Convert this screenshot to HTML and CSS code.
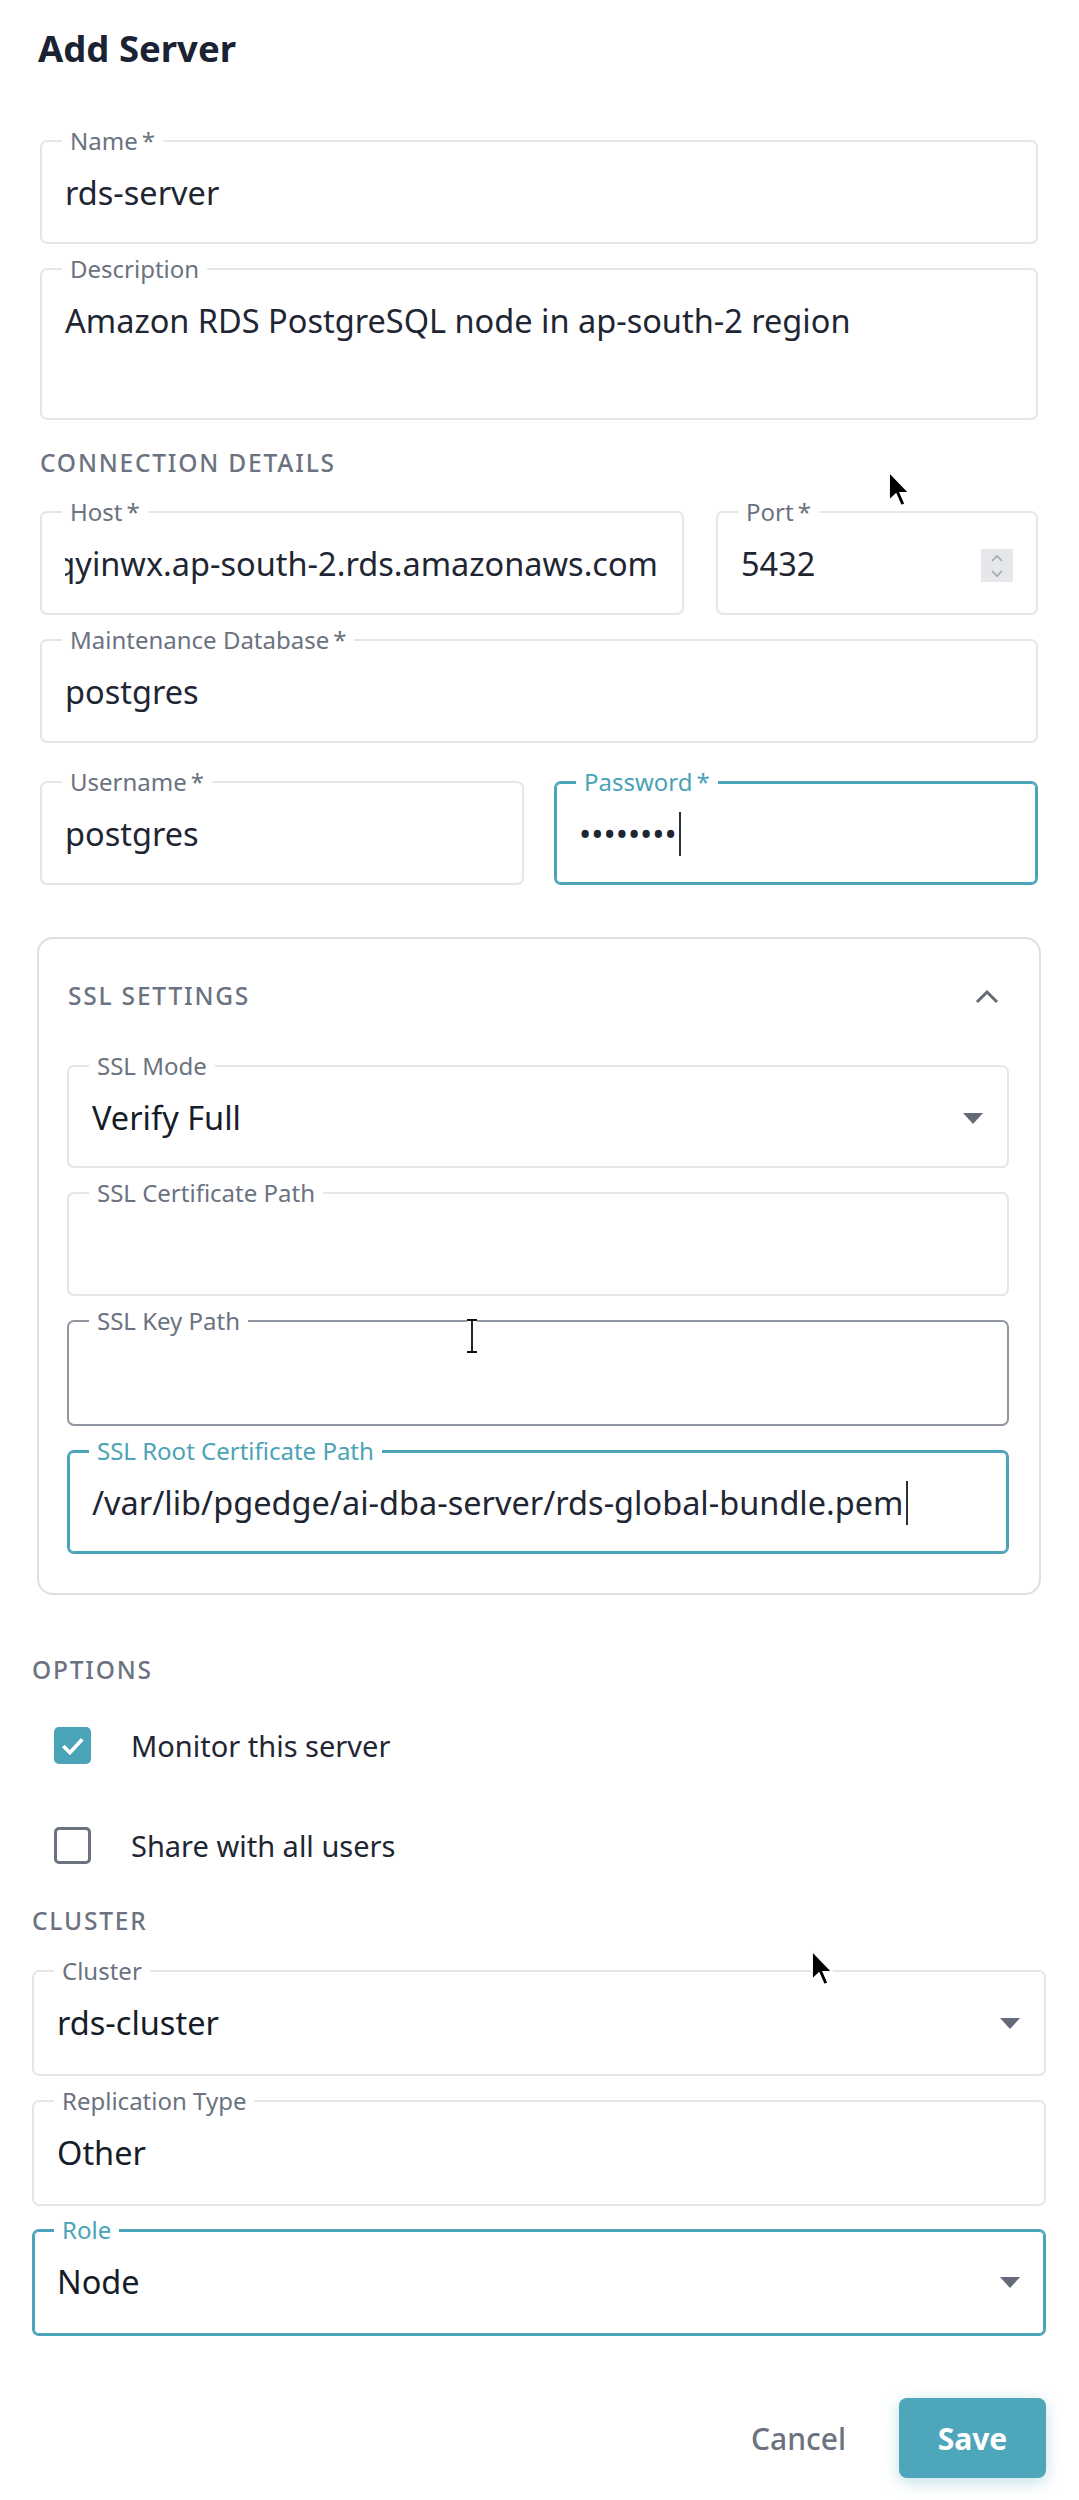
FILE: index.html
```html
<!DOCTYPE html>
<html lang="en">
<head>
	<meta charset="UTF-8">
	<title>Add Server</title>
	<link rel="stylesheet" href="styles.css">
</head>
<body>
	<div class="dialog">
		<h1 class="title">Add Server</h1>

		<div class="form">
			<div class="field">
				<span class="label">Name<span class="req">*</span></span>
				<div class="value">rds-server</div>
			</div>
			<div class="field tall">
				<span class="label">Description</span>
				<div class="value">Amazon RDS PostgreSQL node in ap-south-2 region</div>
			</div>

			<div class="section">Connection Details</div>

			<div class="row">
				<div class="field host">
					<span class="label">Host<span class="req">*</span></span>
					<div class="value clip"><span>rds-server.cxq7hqyinwx.ap-south-2.rds.amazonaws.com</span></div>
				</div>
				<div class="field port">
					<span class="label">Port<span class="req">*</span></span>
					<div class="value">5432</div>
					<div class="spin">
						<svg width="14" height="26" viewBox="0 0 14 26"><polyline points="2,8 7,3 12,8" fill="none" stroke="#a3a7b1" stroke-width="1.6"/><polyline points="2,18 7,23 12,18" fill="none" stroke="#a3a7b1" stroke-width="1.6"/></svg>
					</div>
				</div>
			</div>

			<div class="field">
				<span class="label">Maintenance Database<span class="req">*</span></span>
				<div class="value">postgres</div>
			</div>

			<div class="row wide-gap">
				<div class="field half">
					<span class="label">Username<span class="req">*</span></span>
					<div class="value">postgres</div>
				</div>
				<div class="field half focus">
					<span class="label">Password<span class="req">*</span></span>
					<div class="value dots">&bull;&bull;&bull;&bull;&bull;&bull;&bull;&bull;<span class="caret"></span></div>
				</div>
			</div>

			<!-- SSL 设置卡片 -->
			<div class="card">
				<div class="card-head">
					<span class="section in-card">SSL Settings</span>
					<svg class="chev" width="24" height="16" viewBox="0 0 24 16"><polyline points="2,14 12,4 22,14" fill="none" stroke="#646a77" stroke-width="3"/></svg>
				</div>
				<div class="field select first">
					<span class="label">SSL Mode</span>
					<div class="value dark">Verify Full</div>
					<svg class="arrow" width="20" height="11" viewBox="0 0 20 11"><polygon points="0,0 20,0 10,11" fill="#646a77"/></svg>
				</div>
				<div class="field">
					<span class="label">SSL Certificate Path</span>
					<div class="value"></div>
				</div>
				<div class="field hover">
					<span class="label">SSL Key Path</span>
					<div class="value"></div>
				</div>
				<div class="field focus root">
					<span class="label">SSL Root Certificate Path</span>
					<div class="value">/var/lib/pgedge/ai-dba-server/rds-global-bundle.pem<span class="caret"></span></div>
				</div>
			</div>
		</div>

		<div class="lower">
			<div class="section">Options</div>
			<label class="check-row first">
				<span class="box checked">
					<svg width="37" height="37" viewBox="0 0 36 36"><polyline points="9,18.5 15.5,25 27.5,12" fill="none" stroke="#ffffff" stroke-width="3.6"/></svg>
				</span>
				<span class="check-text">Monitor this server</span>
			</label>
			<label class="check-row">
				<span class="box"></span>
				<span class="check-text">Share with all users</span>
			</label>

			<div class="section cluster-title">Cluster</div>

			<div class="field select big">
				<span class="label">Cluster</span>
				<div class="value dark">rds-cluster</div>
				<svg class="arrow" width="20" height="11" viewBox="0 0 20 11"><polygon points="0,0 20,0 10,11" fill="#646a77"/></svg>
			</div>
			<div class="field big">
				<span class="label">Replication Type</span>
				<div class="value dark">Other</div>
			</div>
			<div class="field select big focus role">
				<span class="label">Role</span>
				<div class="value dark">Node</div>
				<svg class="arrow" width="20" height="11" viewBox="0 0 20 11"><polygon points="0,0 20,0 10,11" fill="#646a77"/></svg>
			</div>

			<div class="actions">
				<button class="btn-cancel">Cancel</button>
				<button class="btn-save">Save</button>
			</div>
		</div>

		<!-- 截图里的鼠标指针 -->
		<svg class="cursor c1" width="24" height="38" viewBox="0 0 13 21"><path d="M1 1 L1 17 L4.8 13.4 L7.6 19.8 L10 18.8 L7.3 12.6 L12.2 12.6 Z" fill="#000" stroke="#fff" stroke-width="1"/></svg>
		<svg class="cursor c2" width="24" height="38" viewBox="0 0 13 21"><path d="M1 1 L1 17 L4.8 13.4 L7.6 19.8 L10 18.8 L7.3 12.6 L12.2 12.6 Z" fill="#000" stroke="#fff" stroke-width="1"/></svg>
		<svg class="cursor ibeam" width="16" height="36" viewBox="0 0 16 36"><path d="M3 2 L13 2 M8 2 L8 34 M3 34 L13 34" fill="none" stroke="#fff" stroke-width="4"/><path d="M3 2 L13 2 M8 2 L8 34 M3 34 L13 34" fill="none" stroke="#111" stroke-width="1.8"/></svg>
	</div>
</body>
</html>
```

FILE: styles.css
```css
*{
	margin: 0;
	padding: 0;
	box-sizing: border-box;
}
body{
	background: #ffffff;
	font-family: "Noto Sans", "Open Sans", sans-serif;
	color: #1f2633;
}
.dialog{
	width: 1079px;
	min-height: 2500px;
	position: relative;
	padding-top: 23px;
}
.title{
	font-size: 36.5px;
	font-weight: 700;
	line-height: 50px;
	color: #1b2332;
	margin-left: 38px;
}
.form{
	padding: 67px 41px 0 40px;
}
/*通用输入框*/
.field{
	position: relative;
	height: 104px;
	border: 2px solid #e4e6eb;
	border-radius: 7px;
	padding: 28px 24px 0 23px;
	display: flex;
	align-items: flex-start;
	margin-top: 24px;
	background: #ffffff;
	min-width: 0;
}
.form > .field:first-child{
	margin-top: 0;
}
.field.tall{
	height: 152px;
}
.label{
	position: absolute;
	top: -14px;
	left: 20px;
	padding: 0 8px;
	background: #ffffff;
	font-size: 24px;
	line-height: 26px;
	color: #6b7280;
	white-space: nowrap;
}
.req{
	margin-left: 4px;
}
.value{
	flex: 1;
	font-size: 32.5px;
	color: #1f2633;
	white-space: nowrap;
	min-width: 0;
}
.value.dark{
	color: #161c28;
}
/*Host 文本过长时只显示末尾*/
.value.clip{
	display: flex;
	justify-content: flex-end;
	overflow: hidden;
}
.value.clip span{
	flex-shrink: 0;
}
.field.focus{
	border-color: #4aa3b7;
	box-shadow: inset 0 0 0 1px #4aa3b7;
}
.field.focus .label{
	color: #4aa3b7;
}
.field.hover{
	border-color: #9096a2;
}
.caret{
	display: inline-block;
	width: 2px;
	height: 44px;
	background: #2a303c;
	vertical-align: -10px;
	margin-left: 2px;
}
.section{
	font-size: 24.5px;
	line-height: 30px;
	letter-spacing: 1.8px;
	text-transform: uppercase;
	color: #6b7280;
	font-weight: 500;
	margin-top: 28px;
}
.row{
	display: flex;
	gap: 32px;
	margin-top: 33px;
}
.row .field{
	margin-top: 0;
}
.row.wide-gap{
	gap: 30px;
	margin-top: 38px;
}
.field.host{
	flex: 1;
}
.field.port{
	width: 322px;
	flex-shrink: 0;
}
.field.half{
	flex: 1;
}
.spin{
	width: 32px;
	height: 33px;
	background: #e6e7eb;
	margin-top: 8px;
	margin-right: -1px;
	display: flex;
	align-items: center;
	justify-content: center;
}
/*SSL 卡片*/
.card{
	margin: 52px -3px 0 -3px;
	border: 2px solid #dcdfe4;
	border-radius: 16px;
	padding: 42px 30px 39px 28px;
}
.card-head{
	display: flex;
	align-items: center;
	justify-content: space-between;
	padding-left: 1px;
	padding-right: 10px;
}
.section.in-card{
	margin-top: 0;
}
.card .field.first{
	margin-top: 54px;
	height: 103px;
}
.card .field.hover{
	height: 106px;
}
.arrow{
	margin-top: 18px;
	flex-shrink: 0;
}
/*下半部分*/
.lower{
	padding: 0 33px 0 32px;
}
.lower .section{
	margin-top: 60px;
}
.check-row{
	display: flex;
	align-items: center;
	height: 60px;
	margin-top: 40px;
	padding-left: 22px;
}
.check-row.first{
	margin-top: 30px;
}
.box{
	width: 37px;
	height: 37px;
	border: 3px solid #6b7280;
	border-radius: 5px;
	flex-shrink: 0;
}
.box.checked{
	border: none;
	background: #4aa3b7;
}
.check-text{
	font-size: 29px;
	margin-left: 40px;
	color: #1f2633;
}
.lower .section.cluster-title{
	margin-top: 31px;
}
.field.big{
	height: 106px;
	padding-left: 23px;
}
.lower .cluster-title + .field{
	margin-top: 34px;
}
.field.role{
	height: 107px;
	margin-top: 23px;
}
.actions{
	display: flex;
	justify-content: flex-end;
	align-items: center;
	gap: 53px;
	margin-top: 62px;
}
.actions button{
	font-family: "Noto Sans", "Open Sans", sans-serif;
	font-size: 30px;
	border: none;
	cursor: pointer;
}
.btn-cancel{
	background: none;
	color: #6b7280;
	font-weight: 500;
}
.btn-save{
	width: 147px;
	height: 80px;
	border-radius: 8px;
	background: #4ea6ba;
	color: #ffffff;
	font-weight: 700;
	box-shadow: 0 4px 16px rgba(74,163,183,0.35);
}
/*指针叠加在内容之上*/
.cursor{
	position: absolute;
}
.c1{
	left: 887px;
	top: 470px;
}
.c2{
	left: 810px;
	top: 1949px;
}
.ibeam{
	left: 464px;
	top: 1318px;
}
```
